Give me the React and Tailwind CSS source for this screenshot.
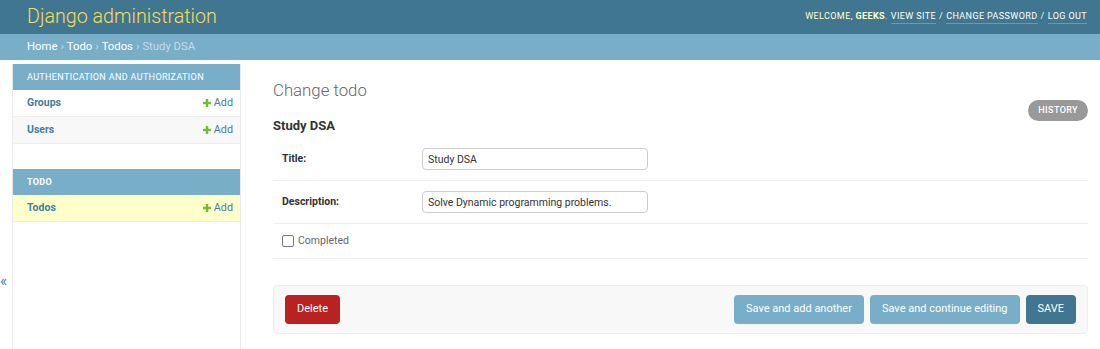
import React from "react";

const apps = [
	{
		name: "Authentication and Authorization",
		current: false,
		models: [
			{ name: "Groups", selected: false },
			{ name: "Users", selected: false },
		],
	},
	{
		name: "Todo",
		current: true,
		models: [{ name: "Todos", selected: true }],
	},
];

function PlusIcon() {
	return (
		<svg width="8" height="8" viewBox="0 0 8 8" className="mr-[3px]">
			<rect x="2.8" y="0" width="2.4" height="8" fill="#70bf2b" />
			<rect x="0" y="2.8" width="8" height="2.4" fill="#70bf2b" />
		</svg>
	);
}

function Header() {
	return (
		<div className="flex h-[34px] items-center justify-between bg-[#417690] pl-[27px] pr-[13px]">
			<h1 className="text-[19.7px] font-light leading-[26px] text-[#f5dd5d]">
				Django administration
			</h1>
			<div className="flex items-center gap-[3px] text-[9px] uppercase tracking-[0.4px] text-[#ffc]">
				<span>
					Welcome, <strong className="font-bold">geeks</strong>.
				</span>
				<a className="border-b border-white/25 text-[#fff]">View site</a>
				<span>/</span>
				<a className="border-b border-white/25 text-[#fff]">Change password</a>
				<span>/</span>
				<a className="border-b border-white/25 text-[#fff]">Log out</a>
			</div>
		</div>
	);
}

function Breadcrumbs() {
	return (
		<div className="flex h-[26px] items-center gap-[3px] bg-[#79aec8] pl-[27px] text-[11.3px] text-white">
			<a>Home</a>
			<span className="text-[#c4dce8]">›</span>
			<a>Todo</a>
			<span className="text-[#c4dce8]">›</span>
			<a>Todos</a>
			<span className="text-[#c4dce8]">›</span>
			<span className="text-[#c4dce8]">Study DSA</span>
		</div>
	);
}

function Sidebar() {
	return (
		<div className="flex">
			<div className="w-[13px] border-r border-[#eaeaea] pt-[210px] text-[15px] leading-[15px] text-[#447e9b]">
				«
			</div>
			<nav className="w-[228px] border-r border-[#eaeaea]">
				{apps.map((app) => (
					<div key={app.name} className="mb-[25px]">
						<div
							className={
								app.current
									? "bg-[#79aec8] px-[14px] py-[5px] text-[9px] font-bold leading-[16px] uppercase tracking-[0.35px] text-white"
									: "bg-[#79aec8] px-[14px] py-[5px] text-[9px] leading-[16px] uppercase tracking-[0.35px] text-white"
							}
						>
							{app.name}
						</div>
						{app.models.map((model, i) => (
							<div
								key={model.name}
								className={
									model.selected
										? "flex items-center justify-between border-b border-[#eee] bg-[#ffc] py-[5px] pl-[14px] pr-[7px] text-[10.5px] leading-[16px]"
										: i % 2 === 1
										? "flex items-center justify-between border-b border-[#eee] bg-[#f8f8f8] py-[5px] pl-[14px] pr-[7px] text-[10.5px] leading-[16px]"
										: "flex items-center justify-between border-b border-[#eee] bg-white py-[5px] pl-[14px] pr-[7px] text-[10.5px] leading-[16px]"
								}
							>
								<a className="font-bold text-[#447e9b]">{model.name}</a>
								<a className="flex items-center text-[10.8px] text-[#447e9b]">
									<PlusIcon />
									Add
								</a>
							</div>
						))}
					</div>
				))}
			</nav>
		</div>
	);
}

function FormRow({ label, value }) {
	return (
		<div className="flex items-center border-b border-[#eee] px-[9px] py-[10px]">
			<label className="w-[140px] text-[10.5px] font-bold text-[#333]">{label}</label>
			<input
				readOnly
				value={value}
				className="h-[22px] w-[226px] rounded-[4px] border border-[#ccc] px-[5px] text-[10.5px] text-[#333] outline-none"
			/>
		</div>
	);
}

function Content() {
	return (
		<div className="flex-1 pl-[32px] pr-[12px] pt-[14px]">
			<div className="flex justify-between">
				<div>
					<h1 className="text-[16.8px] font-light leading-[24px] text-[#666]">
						Change todo
					</h1>
					<h2 className="mt-[14px] mb-[2px] text-[13px] font-bold leading-[20px] text-[#333]">
						Study DSA
					</h2>
				</div>
				<a className="mt-[22px] flex h-[21px] items-center self-start rounded-full bg-[#999] px-[10px] text-[9px] font-medium uppercase tracking-[0.4px] text-white">
					History
				</a>
			</div>
			<FormRow label="Title:" value="Study DSA" />
			<FormRow label="Description:" value="Solve Dynamic programming problems." />
			<div className="flex items-center border-b border-[#eee] px-[9px] py-[10px]">
				<span className="mr-[4px] h-[12px] w-[12px] rounded-[2px] border border-[#767676] bg-white" />
				<span className="text-[10.5px] leading-[14px] text-[#666]">Completed</span>
			</div>
			<div className="mt-[26px] flex items-center justify-between rounded-[4px] border border-[#eee] bg-[#f8f8f8] px-[11px] py-[9px]">
				<a className="flex h-[29px] items-center rounded-[4px] bg-[#ba2121] px-[12px] text-[11px] text-white">
					Delete
				</a>
				<div className="flex gap-[6px]">
					<button className="h-[29px] rounded-[4px] bg-[#79aec8] px-[12px] text-[11px] text-white">
						Save and add another
					</button>
					<button className="h-[29px] rounded-[4px] bg-[#79aec8] px-[12px] text-[11px] text-white">
						Save and continue editing
					</button>
					<button className="h-[29px] rounded-[4px] bg-[#417690] px-[12px] text-[11px] uppercase text-white">
						Save
					</button>
				</div>
			</div>
		</div>
	);
}

export default function App() {
	return (
		<div className="h-[349px] overflow-hidden bg-white font-[Roboto,'Liberation_Sans',sans-serif] text-[#333]">
			<Header />
			<Breadcrumbs />
			<div className="mt-[4px] flex h-[285px]">
				<Sidebar />
				<Content />
			</div>
		</div>
	);
}
